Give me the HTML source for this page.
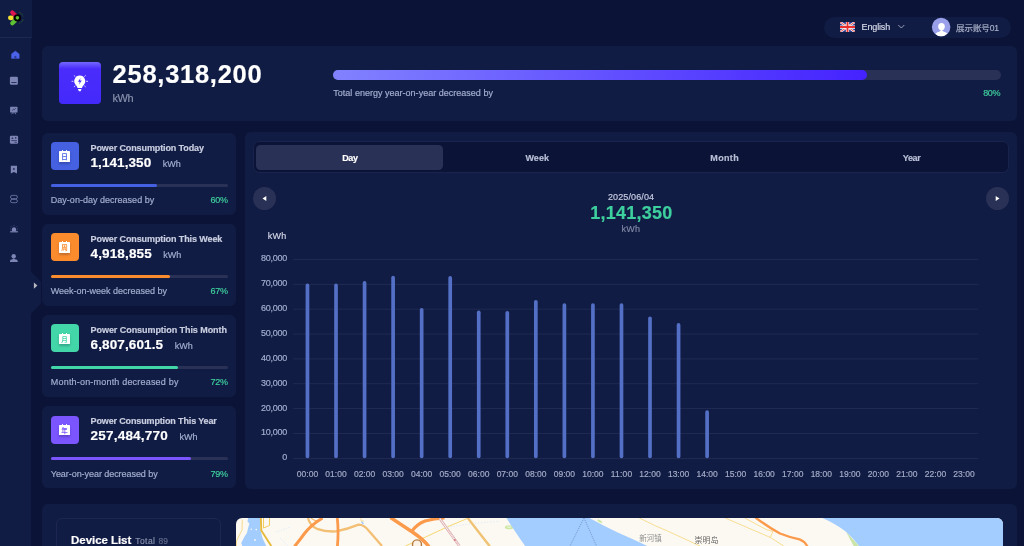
<!DOCTYPE html>
<html lang="en"><head><meta charset="utf-8"><title>Energy Dashboard</title>
<style>
html,body{margin:0;padding:0;}
body{width:1024px;height:546px;overflow:hidden;background:#0b1437;position:relative;font-family:"Liberation Sans","Noto Sans CJK SC",sans-serif;color:#fff;}
.a{position:absolute;}
.t{position:absolute;white-space:nowrap;line-height:30px;height:30px;-webkit-text-stroke:0.18px currentColor;}
.panel{position:absolute;background:#111c44;border-radius:6px;}
.b{font-weight:bold;}
</style></head>
<body>
<div id="root" style="position:absolute;left:0;top:0;width:1024px;height:546px;will-change:transform;">
<div class="a" style="left:0;top:0;width:32px;height:37px;background:#111c44;"></div>
<div class="a" style="left:0;top:37px;width:31px;height:509px;background:#111c44;"></div>
<div class="a" style="left:0;top:37px;width:32px;height:1px;background:#1d2751;"></div>
<svg class="a" style="left:0;top:0;" width="32" height="36" viewBox="0 0 32 36">
<line x1="12.3" y1="12.4" x2="15.2" y2="15.2" stroke="#dc1450" stroke-width="4.2" stroke-linecap="round"/>
<line x1="12.3" y1="23.3" x2="15.2" y2="20.5" stroke="#5fc232" stroke-width="4.2" stroke-linecap="round"/>
<line x1="10.3" y1="17.85" x2="11.4" y2="17.85" stroke="#f5e030" stroke-width="4.6" stroke-linecap="round"/>
<path d="M19.38 12.4 A5.8 5.8 0 0 1 23.0 16.35 M23.0 19.35 A5.8 5.8 0 0 1 19.38 23.3" fill="none" stroke="#2f6e2a" stroke-width="0.8" stroke-dasharray="1.6 0.7"/>
<circle cx="17.4" cy="17.85" r="2.75" fill="#5fc232" stroke="#000" stroke-width="1.9"/>
</svg>
<svg class="a" style="left:0;top:40px;" width="32" height="230" viewBox="0 40 32 230">
<path d="M15.35 50.9 L19.3 54 V58.5 H11.4 V54 Z" fill="#4a63e8" stroke="#4a63e8" stroke-width="0.3" stroke-linejoin="round"/>
<path d="M14.3 58.5 V56.3 Q15.35 55.2 16.4 56.3 V58.5 Z" fill="#2c3a9a"/>
<rect x="9.9" y="76.8" width="8" height="8" rx="1.2" fill="#7d85b5"/>
<rect x="11.2" y="81.9" width="5.4" height="1" rx="0.5" fill="#2a3260"/>
<rect x="10.1" y="106.8" width="7.4" height="5.7" rx="0.6" fill="#7d85b5"/>
<path d="M11.8 114.2 L12.6 112.4 M15.8 114.2 L15 112.4 M13.8 112.4 V113.6" stroke="#7d85b5" stroke-width="0.8" fill="none"/>
<path d="M12.2 110.4 L13.6 109.2 L14.2 109.7 L15.7 108.3" stroke="#2a3260" stroke-width="0.9" fill="none"/>
<rect x="9.9" y="135.7" width="8.2" height="8" rx="1.2" fill="#7d85b5"/>
<path d="M11.3 139 L12.4 136.9 L13.5 139 Z" fill="#2a3260"/><circle cx="15.7" cy="137.9" r="0.8" fill="#2a3260"/>
<path d="M11.3 140.6 H16.8 M14.6 142.3 H16.8" stroke="#2a3260" stroke-width="0.8"/>
<path d="M10.8 165.8 H17 V173.6 L13.9 171.9 L10.8 173.6 Z" fill="#7d85b5"/><circle cx="13.9" cy="168.9" r="1" fill="#2a3260"/>
<rect x="10.5" y="195.4" width="6.9" height="3.3" rx="1.65" fill="none" stroke="#616a99" stroke-width="1"/>
<rect x="10.5" y="199.4" width="6.9" height="3.3" rx="1.65" fill="none" stroke="#616a99" stroke-width="1"/>
<path d="M11.9 231.2 V229.3 A2.1 2.1 0 0 1 16.1 229.3 V231.2 Z" fill="#7d85b5"/>
<rect x="10.2" y="231.2" width="7.7" height="1.2" fill="#7d85b5"/>
<path d="M14 226.2 V225.2 M11.6 227 L10.9 226.3 M16.4 227 L17.1 226.3 M10.9 228.9 H10.1 M17.1 228.9 H17.9" stroke="#4f588a" stroke-width="0.8"/>
<circle cx="13.7" cy="256.3" r="2.2" fill="#7d85b5"/>
<path d="M10 261.9 V260.9 Q10 259.6 12.4 259.2 L13.7 258.2 L15 259.2 Q17.7 259.6 17.7 260.9 V261.9 Z" fill="#7d85b5"/>
</svg>
<svg class="a" style="left:30px;top:266px;" width="14" height="52" viewBox="30 266 14 52">
<path d="M31 272 L41 281.4 V303.4 L31 313.8 Z" fill="#111c44"/>
<path d="M33.9 282.4 L37.4 285.6 L33.9 288.8 Z" fill="#b7b8c0"/>
</svg>
<div class="a" style="left:824px;top:16.5px;width:187px;height:21px;border-radius:11px;background:#111c44;"></div>
<div class="t" style="top:12px;font-size:9px;color:#d5d9e8;left:861.60px;letter-spacing:-0.155px;">English</div>
<div class="t" style="top:13px;font-size:8.5px;color:#a9b0c8;left:956.10px;letter-spacing:-0.094px;">展示账号01</div>
<div class="panel" style="left:42px;top:46px;width:974.5px;height:75px;"></div>
<div class="a" style="left:59px;top:62px;width:42px;height:42px;border-radius:4px;background:linear-gradient(180deg,#7468ff 0%,#4a2dfc 16%,#4329fb 100%);"></div>
<div class="t" style="top:59px;font-size:25.5px;color:#fff;left:112.60px;letter-spacing:0.729px;font-weight:bold;">258,318,200</div>
<div class="t" style="top:83px;font-size:11px;color:#8790ab;left:112.50px;letter-spacing:-0.5px;">kWh</div>
<div class="a" style="left:333px;top:70px;width:667.5px;height:10px;border-radius:5px;background:#2a3156;"></div>
<div class="a" style="left:333px;top:70px;width:534px;height:10px;border-radius:5px;background:linear-gradient(90deg,#8282ff,#4422ff);"></div>
<div class="t" style="top:78px;font-size:9px;color:#a3aed0;left:333.30px;letter-spacing:0.014px;">Total energy year-on-year decreased by</div>
<div class="t" style="top:78px;font-size:9px;color:#3ecf9e;right:24.01px;letter-spacing:-0.408px;">80%</div>
<svg class="a" style="left:59px;top:62px;" width="42" height="42" viewBox="59 62 42 42">
<path d="M79.75 75.6 A5.5 5.5 0 0 1 83.7 84.9 Q82.2 86.3 82 88 H77.5 Q77.3 86.3 75.8 84.9 A5.5 5.5 0 0 1 79.75 75.6 Z" fill="#fff"/>
<path d="M77.9 89.1 H81.6 L80.6 91.3 H78.9 Z" fill="#fff"/>
<path d="M80.6 77.9 L77.9 81.7 H79.7 L79 84.5 L81.8 80.5 H79.9 Z" fill="#4329fb"/>
<path d="M72 81.3 H73 M86.5 81.3 H87.6 M74.2 75.7 L75 76.4 M85.4 75.7 L84.6 76.4 M74.2 86.7 L75 86 M85.4 86.7 L84.6 86" stroke="#fff" stroke-width="0.9" stroke-linecap="round" opacity="0.85"/>
</svg>
<svg class="a" style="left:840px;top:22px;" width="15" height="10" viewBox="0 0 60 40" preserveAspectRatio="none">
<rect width="60" height="40" fill="#2b3a8c"/>
<path d="M0 0 L60 40 M60 0 L0 40" stroke="#fff" stroke-width="9"/>
<path d="M0 0 L60 40 M60 0 L0 40" stroke="#e03a3a" stroke-width="3.5"/>
<path d="M30 0 V40 M0 20 H60" stroke="#fff" stroke-width="13"/>
<path d="M30 0 V40 M0 20 H60" stroke="#e8302f" stroke-width="7.5"/>
</svg>
<svg class="a" style="left:896px;top:22px;" width="12" height="10" viewBox="896 22 12 10"><path d="M898.3 25 L901.3 28 L904.3 25" fill="none" stroke="#b8bfd6" stroke-width="0.8"/></svg>
<svg class="a" style="left:931px;top:17px;" width="21" height="21" viewBox="931 17 21 21">
<defs><clipPath id="av"><circle cx="941.15" cy="26.95" r="9.25"/></clipPath></defs>
<circle cx="941.15" cy="26.95" r="9.25" fill="#9a9fe9"/>
<g clip-path="url(#av)" fill="#fff"><ellipse cx="941.5" cy="26.6" rx="3.3" ry="3.7"/><path d="M934.5 37 Q934.8 32.6 939.6 31.6 L941.5 29.5 L943.4 31.6 Q948.2 32.6 948.5 37 Z"/></g>
</svg>
<div class="panel" style="left:42px;top:132.50px;width:194px;height:82px;"></div>
<div class="a" style="left:51px;top:142.10px;width:28px;height:28px;border-radius:4px;background:#4560e0;"></div>
<div class="a" style="left:59px;top:151.30px;width:11.1px;height:10.3px;background:#fff;border-radius:0.6px;box-shadow:0 1.5px 2.5px rgba(0,0,30,0.22);"></div>
<div class="a" style="left:61.8px;top:150.20px;width:1.3px;height:1.4px;background:#fff;opacity:.9;"></div><div class="a" style="left:66.2px;top:150.20px;width:1.3px;height:1.4px;background:#fff;opacity:.9;"></div>
<div class="a" style="left:59px;top:152.20px;width:11.1px;height:9px;line-height:9px;text-align:center;font-size:6.5px;font-weight:bold;color:#4560e0;font-family:'Noto Sans CJK SC',sans-serif;">日</div>
<div class="t" style="top:133px;font-size:9px;color:#c9cee0;left:90.60px;letter-spacing:-0.111px;font-weight:bold;">Power Consumption Today</div>
<div class="t" style="top:148px;font-size:13.5px;color:#fff;left:90.50px;letter-spacing:0.073px;font-weight:bold;">1,141,350</div>
<div class="t" style="top:149px;font-size:9px;color:#a3aed0;left:162.75px;">kWh</div>
<div class="a" style="left:51px;top:184.00px;width:177px;height:3px;border-radius:1.5px;background:#2a3156;"></div>
<div class="a" style="left:51px;top:184.00px;width:106.2px;height:3px;border-radius:1.5px;background:#4560e0;"></div>
<div class="t" style="top:185px;font-size:9px;color:#a3aed0;left:50.80px;letter-spacing:0.015px;">Day-on-day decreased by</div>
<div class="t" style="top:185px;font-size:9px;color:#3ecf9e;right:796.31px;letter-spacing:-0.308px;">60%</div>
<div class="panel" style="left:42px;top:223.65px;width:194px;height:82px;"></div>
<div class="a" style="left:51px;top:233.25px;width:28px;height:28px;border-radius:4px;background:#fb8c2e;"></div>
<div class="a" style="left:59px;top:242.45px;width:11.1px;height:10.3px;background:#fff;border-radius:0.6px;box-shadow:0 1.5px 2.5px rgba(0,0,30,0.22);"></div>
<div class="a" style="left:61.8px;top:241.35px;width:1.3px;height:1.4px;background:#fff;opacity:.9;"></div><div class="a" style="left:66.2px;top:241.35px;width:1.3px;height:1.4px;background:#fff;opacity:.9;"></div>
<div class="a" style="left:59px;top:243.35px;width:11.1px;height:9px;line-height:9px;text-align:center;font-size:6.5px;font-weight:bold;color:#fb8c2e;font-family:'Noto Sans CJK SC',sans-serif;">周</div>
<div class="t" style="top:224px;font-size:9px;color:#c9cee0;left:90.60px;letter-spacing:-0.102px;font-weight:bold;">Power Consumption This Week</div>
<div class="t" style="top:239px;font-size:13.5px;color:#fff;left:90.50px;letter-spacing:0.148px;font-weight:bold;">4,918,855</div>
<div class="t" style="top:240px;font-size:9px;color:#a3aed0;left:163.35px;">kWh</div>
<div class="a" style="left:51px;top:275.15px;width:177px;height:3px;border-radius:1.5px;background:#2a3156;"></div>
<div class="a" style="left:51px;top:275.15px;width:118.6px;height:3px;border-radius:1.5px;background:#fb8c2e;"></div>
<div class="t" style="top:276px;font-size:9px;color:#a3aed0;left:50.80px;letter-spacing:-0.009px;">Week-on-week decreased by</div>
<div class="t" style="top:276px;font-size:9px;color:#3ecf9e;right:796.31px;letter-spacing:-0.308px;">67%</div>
<div class="panel" style="left:42px;top:314.80px;width:194px;height:82px;"></div>
<div class="a" style="left:51px;top:324.40px;width:28px;height:28px;border-radius:4px;background:#43d6a8;"></div>
<div class="a" style="left:59px;top:333.60px;width:11.1px;height:10.3px;background:#fff;border-radius:0.6px;box-shadow:0 1.5px 2.5px rgba(0,0,30,0.22);"></div>
<div class="a" style="left:61.8px;top:332.50px;width:1.3px;height:1.4px;background:#fff;opacity:.9;"></div><div class="a" style="left:66.2px;top:332.50px;width:1.3px;height:1.4px;background:#fff;opacity:.9;"></div>
<div class="a" style="left:59px;top:334.50px;width:11.1px;height:9px;line-height:9px;text-align:center;font-size:6.5px;font-weight:bold;color:#43d6a8;font-family:'Noto Sans CJK SC',sans-serif;">月</div>
<div class="t" style="top:315px;font-size:9px;color:#c9cee0;left:90.60px;letter-spacing:-0.059px;font-weight:bold;">Power Consumption This Month</div>
<div class="t" style="top:330px;font-size:13.5px;color:#fff;left:90.50px;letter-spacing:0.127px;font-weight:bold;">6,807,601.5</div>
<div class="t" style="top:331px;font-size:9px;color:#a3aed0;left:174.70px;">kWh</div>
<div class="a" style="left:51px;top:366.30px;width:177px;height:3px;border-radius:1.5px;background:#2a3156;"></div>
<div class="a" style="left:51px;top:366.30px;width:127.4px;height:3px;border-radius:1.5px;background:#43d6a8;"></div>
<div class="t" style="top:367px;font-size:9px;color:#a3aed0;left:50.80px;letter-spacing:0.193px;">Month-on-month decreased by</div>
<div class="t" style="top:367px;font-size:9px;color:#3ecf9e;right:796.31px;letter-spacing:-0.308px;">72%</div>
<div class="panel" style="left:42px;top:405.95px;width:194px;height:82px;"></div>
<div class="a" style="left:51px;top:415.55px;width:28px;height:28px;border-radius:4px;background:#7b55ff;"></div>
<div class="a" style="left:59px;top:424.75px;width:11.1px;height:10.3px;background:#fff;border-radius:0.6px;box-shadow:0 1.5px 2.5px rgba(0,0,30,0.22);"></div>
<div class="a" style="left:61.8px;top:423.65px;width:1.3px;height:1.4px;background:#fff;opacity:.9;"></div><div class="a" style="left:66.2px;top:423.65px;width:1.3px;height:1.4px;background:#fff;opacity:.9;"></div>
<div class="a" style="left:59px;top:425.65px;width:11.1px;height:9px;line-height:9px;text-align:center;font-size:6.5px;font-weight:bold;color:#7b55ff;font-family:'Noto Sans CJK SC',sans-serif;">年</div>
<div class="t" style="top:406px;font-size:9px;color:#c9cee0;left:90.60px;letter-spacing:-0.141px;font-weight:bold;">Power Consumption This Year</div>
<div class="t" style="top:421px;font-size:13.5px;color:#fff;left:90.50px;letter-spacing:0.222px;font-weight:bold;">257,484,770</div>
<div class="t" style="top:422px;font-size:9px;color:#a3aed0;left:179.40px;">kWh</div>
<div class="a" style="left:51px;top:457.45px;width:177px;height:3px;border-radius:1.5px;background:#2a3156;"></div>
<div class="a" style="left:51px;top:457.45px;width:139.8px;height:3px;border-radius:1.5px;background:#7b55ff;"></div>
<div class="t" style="top:459px;font-size:9px;color:#a3aed0;left:50.80px;letter-spacing:-0.056px;">Year-on-year decreased by</div>
<div class="t" style="top:459px;font-size:9px;color:#3ecf9e;right:796.31px;letter-spacing:-0.308px;">79%</div>
<div class="panel" style="left:245px;top:132.3px;width:771.6px;height:357.2px;"></div>
<div class="a" style="left:253.5px;top:142.2px;width:754px;height:30.3px;border-radius:5px;background:#0b1437;box-shadow:0 0 0 0.7px #1c2650;"></div>
<div class="a" style="left:256.2px;top:144.8px;width:187.3px;height:25.2px;border-radius:4.5px;background:#2a3156;"></div>
<div class="t" style="top:143px;font-size:9px;color:#fff;left:199.91px;width:300px;text-align:center;letter-spacing:-0.383px;font-weight:bold;">Day</div>
<div class="t" style="top:143px;font-size:9px;color:#b8bfd6;left:387.24px;width:300px;text-align:center;letter-spacing:0.08px;font-weight:bold;">Week</div>
<div class="t" style="top:143px;font-size:9px;color:#b8bfd6;left:574.67px;width:300px;text-align:center;letter-spacing:0.35px;font-weight:bold;">Month</div>
<div class="t" style="top:143px;font-size:9px;color:#b8bfd6;left:761.60px;width:300px;text-align:center;letter-spacing:-0.394px;font-weight:bold;">Year</div>
<div class="a" style="left:253px;top:187px;width:23px;height:23px;border-radius:50%;background:#2a3156;"></div>
<div class="a" style="left:985.5px;top:187px;width:23px;height:23px;border-radius:50%;background:#2a3156;"></div>
<svg class="a" style="left:253px;top:187px;" width="23" height="23" viewBox="0 0 23 23"><path d="M13.3 9 L13.3 14 L9.5 11.5 Z" fill="#fff"/></svg>
<svg class="a" style="left:985.5px;top:187px;" width="23" height="23" viewBox="0 0 23 23"><path d="M9.7 9 L9.7 14 L13.5 11.5 Z" fill="#fff"/></svg>
<div class="t" style="top:182px;font-size:9px;color:#c5cbe0;left:481.06px;width:300px;text-align:center;letter-spacing:0.128px;">2025/06/04</div>
<div class="t" style="top:198px;font-size:18px;color:#3ecf9e;left:481.41px;width:300px;text-align:center;letter-spacing:0.221px;font-weight:bold;">1,141,350</div>
<div class="t" style="top:214px;font-size:9px;color:#7d86a3;left:480.90px;width:300px;text-align:center;letter-spacing:0.2px;">kWh</div>
<div class="t" style="top:221px;font-size:9px;color:#d0d5e5;left:267.75px;letter-spacing:0.25px;">kWh</div>
<svg class="a" style="left:0;top:0;" width="1024" height="546" viewBox="0 0 1024 546"><rect x="293.2" y="259.00" width="685.0999999999999" height="0.8" fill="#242e55"/><rect x="293.2" y="283.88" width="685.0999999999999" height="0.8" fill="#242e55"/><rect x="293.2" y="308.75" width="685.0999999999999" height="0.8" fill="#242e55"/><rect x="293.2" y="333.62" width="685.0999999999999" height="0.8" fill="#242e55"/><rect x="293.2" y="358.50" width="685.0999999999999" height="0.8" fill="#242e55"/><rect x="293.2" y="383.38" width="685.0999999999999" height="0.8" fill="#242e55"/><rect x="293.2" y="408.25" width="685.0999999999999" height="0.8" fill="#242e55"/><rect x="293.2" y="433.12" width="685.0999999999999" height="0.8" fill="#242e55"/><rect x="293.2" y="458.00" width="685.0999999999999" height="0.8" fill="#242e55"/><rect x="305.62" y="283.60" width="3.7" height="174.60" rx="1.85" fill="#5470c6"/><rect x="334.17" y="283.60" width="3.7" height="174.60" rx="1.85" fill="#5470c6"/><rect x="362.71" y="280.90" width="3.7" height="177.30" rx="1.85" fill="#5470c6"/><rect x="391.26" y="275.75" width="3.7" height="182.45" rx="1.85" fill="#5470c6"/><rect x="419.81" y="308.00" width="3.7" height="150.20" rx="1.85" fill="#5470c6"/><rect x="448.35" y="276.10" width="3.7" height="182.10" rx="1.85" fill="#5470c6"/><rect x="476.90" y="310.50" width="3.7" height="147.70" rx="1.85" fill="#5470c6"/><rect x="505.44" y="310.90" width="3.7" height="147.30" rx="1.85" fill="#5470c6"/><rect x="533.99" y="299.90" width="3.7" height="158.30" rx="1.85" fill="#5470c6"/><rect x="562.54" y="303.25" width="3.7" height="154.95" rx="1.85" fill="#5470c6"/><rect x="591.08" y="303.25" width="3.7" height="154.95" rx="1.85" fill="#5470c6"/><rect x="619.63" y="303.25" width="3.7" height="154.95" rx="1.85" fill="#5470c6"/><rect x="648.17" y="316.50" width="3.7" height="141.70" rx="1.85" fill="#5470c6"/><rect x="676.72" y="323.10" width="3.7" height="135.10" rx="1.85" fill="#5470c6"/><rect x="705.26" y="410.25" width="3.7" height="47.95" rx="1.85" fill="#5470c6"/></svg>
<div class="t" style="top:243px;font-size:9px;color:#a3aed0;right:737.06px;letter-spacing:-0.256px;">80,000</div>
<div class="t" style="top:268px;font-size:9px;color:#a3aed0;right:737.06px;letter-spacing:-0.256px;">70,000</div>
<div class="t" style="top:293px;font-size:9px;color:#a3aed0;right:737.06px;letter-spacing:-0.256px;">60,000</div>
<div class="t" style="top:318px;font-size:9px;color:#a3aed0;right:737.06px;letter-spacing:-0.256px;">50,000</div>
<div class="t" style="top:343px;font-size:9px;color:#a3aed0;right:737.06px;letter-spacing:-0.256px;">40,000</div>
<div class="t" style="top:368px;font-size:9px;color:#a3aed0;right:737.06px;letter-spacing:-0.256px;">30,000</div>
<div class="t" style="top:393px;font-size:9px;color:#a3aed0;right:737.06px;letter-spacing:-0.256px;">20,000</div>
<div class="t" style="top:417px;font-size:9px;color:#a3aed0;right:737.06px;letter-spacing:-0.256px;">10,000</div>
<div class="t" style="top:442px;font-size:9px;color:#a3aed0;right:736.80px;">0</div>
<div class="t" style="top:459px;font-size:8.5px;color:#a3abc6;left:157.48px;width:300px;text-align:center;letter-spacing:0.005px;">00:00</div>
<div class="t" style="top:459px;font-size:8.5px;color:#a3abc6;left:186.02px;width:300px;text-align:center;letter-spacing:0.005px;">01:00</div>
<div class="t" style="top:459px;font-size:8.5px;color:#a3abc6;left:214.57px;width:300px;text-align:center;letter-spacing:0.005px;">02:00</div>
<div class="t" style="top:459px;font-size:8.5px;color:#a3abc6;left:243.11px;width:300px;text-align:center;letter-spacing:0.005px;">03:00</div>
<div class="t" style="top:459px;font-size:8.5px;color:#a3abc6;left:271.66px;width:300px;text-align:center;letter-spacing:0.005px;">04:00</div>
<div class="t" style="top:459px;font-size:8.5px;color:#a3abc6;left:300.20px;width:300px;text-align:center;letter-spacing:0.005px;">05:00</div>
<div class="t" style="top:459px;font-size:8.5px;color:#a3abc6;left:328.75px;width:300px;text-align:center;letter-spacing:0.005px;">06:00</div>
<div class="t" style="top:459px;font-size:8.5px;color:#a3abc6;left:357.30px;width:300px;text-align:center;letter-spacing:0.005px;">07:00</div>
<div class="t" style="top:459px;font-size:8.5px;color:#a3abc6;left:385.84px;width:300px;text-align:center;letter-spacing:0.005px;">08:00</div>
<div class="t" style="top:459px;font-size:8.5px;color:#a3abc6;left:414.39px;width:300px;text-align:center;letter-spacing:0.005px;">09:00</div>
<div class="t" style="top:459px;font-size:8.5px;color:#a3abc6;left:442.93px;width:300px;text-align:center;letter-spacing:0.005px;">10:00</div>
<div class="t" style="top:459px;font-size:8.5px;color:#a3abc6;left:471.56px;width:300px;text-align:center;letter-spacing:0.165px;">11:00</div>
<div class="t" style="top:459px;font-size:8.5px;color:#a3abc6;left:500.03px;width:300px;text-align:center;letter-spacing:0.005px;">12:00</div>
<div class="t" style="top:459px;font-size:8.5px;color:#a3abc6;left:528.57px;width:300px;text-align:center;letter-spacing:0.005px;">13:00</div>
<div class="t" style="top:459px;font-size:8.5px;color:#a3abc6;left:557.12px;width:300px;text-align:center;letter-spacing:0.005px;">14:00</div>
<div class="t" style="top:459px;font-size:8.5px;color:#a3abc6;left:585.66px;width:300px;text-align:center;letter-spacing:0.005px;">15:00</div>
<div class="t" style="top:459px;font-size:8.5px;color:#a3abc6;left:614.21px;width:300px;text-align:center;letter-spacing:0.005px;">16:00</div>
<div class="t" style="top:459px;font-size:8.5px;color:#a3abc6;left:642.75px;width:300px;text-align:center;letter-spacing:0.005px;">17:00</div>
<div class="t" style="top:459px;font-size:8.5px;color:#a3abc6;left:671.30px;width:300px;text-align:center;letter-spacing:0.005px;">18:00</div>
<div class="t" style="top:459px;font-size:8.5px;color:#a3abc6;left:699.85px;width:300px;text-align:center;letter-spacing:0.005px;">19:00</div>
<div class="t" style="top:459px;font-size:8.5px;color:#a3abc6;left:728.39px;width:300px;text-align:center;letter-spacing:0.005px;">20:00</div>
<div class="t" style="top:459px;font-size:8.5px;color:#a3abc6;left:756.94px;width:300px;text-align:center;letter-spacing:0.005px;">21:00</div>
<div class="t" style="top:459px;font-size:8.5px;color:#a3abc6;left:785.48px;width:300px;text-align:center;letter-spacing:0.005px;">22:00</div>
<div class="t" style="top:459px;font-size:8.5px;color:#a3abc6;left:814.03px;width:300px;text-align:center;letter-spacing:0.005px;">23:00</div>
<div class="panel" style="left:42px;top:503.5px;width:974.5px;height:60px;"></div>
<div class="a" style="left:56px;top:518px;width:165px;height:60px;border-radius:6px;border:0.6px solid #1d2650;box-sizing:border-box;"></div>
<div class="t" style="top:525px;font-size:11.5px;color:#fff;left:71.10px;letter-spacing:-0.053px;font-weight:bold;">Device List</div>
<div class="t" style="top:526px;font-size:8.5px;color:#8790ab;left:135.20px;letter-spacing:0.458px;">Total</div>
<div class="t" style="top:526px;font-size:8.5px;color:#5f6888;left:158.60px;letter-spacing:-0.069px;">89</div>
<svg class="a" style="left:236px;top:518px;" width="767" height="28" viewBox="236 518 767 28">
<defs><clipPath id="mc"><rect x="236" y="518" width="767" height="40" rx="6"/></clipPath></defs>
<g clip-path="url(#mc)">
<rect x="236" y="518" width="767" height="28" fill="#fcf9f2"/>
<!-- lake -->
<path d="M248.1 518 L260 518 L260 528 L261.2 533 L262.5 538 L266.5 546.5 L242.5 546.5 L241.2 543 L242.5 540.5 L244.4 536.8 L246.9 533 L248.1 528 L249.4 523.6 L247.5 521.7 Z" fill="#a3ccff"/>
<circle cx="251.3" cy="529.2" r="0.8" fill="#fcf9f2"/><circle cx="256.2" cy="529.6" r="0.8" fill="#fcf9f2"/><circle cx="255" cy="540" r="0.9" fill="#fcf9f2"/>
<path d="M242.3 519.5 L242 530 L236.5 541 L236.3 546" fill="none" stroke="#f2cc62" stroke-width="0.7"/>
<path d="M263.5 518 V528 L269.5 525.5 V518" fill="none" stroke="#f0c64e" stroke-width="0.9"/>
<path d="M260.8 518 L261.3 530.5 L271.3 546" fill="none" stroke="#e6ba3c" stroke-width="1.9"/>
<path d="M276 532 L290 527 M280 538 L288 546" stroke="#cfe3fb" stroke-width="0.6" stroke-dasharray="1.2 1.4" fill="none"/>
<!-- light orange road -->
<path d="M308 518 Q310 526 317 528.8 Q326 532 336 531.4 Q348 529 358.5 524.6 Q364 524.5 369 531 L382 546" fill="none" stroke="#f3bf74" stroke-width="2.3"/>
<path d="M311 518 Q318 524 322 518" fill="none" stroke="#f3bf74" stroke-width="1.2"/>
<!-- orange roads -->
<path d="M322.5 518 Q311 525 304.5 533.5 Q299 541 294.5 546.5" fill="none" stroke="#fb9a4b" stroke-width="3"/>
<path d="M337.3 518 Q338.8 532 337.4 546.5" fill="none" stroke="#fb9a4b" stroke-width="2.8"/>
<path d="M362 522 l1 1.6" stroke="#a3ccff" stroke-width="1.6" stroke-linecap="round"/>
<path d="M361 518 v3 h3" fill="none" stroke="#f2cc62" stroke-width="0.6"/>
<path d="M467.8 518.3 L447.5 526.8 L425.6 537 L405.3 546" fill="none" stroke="#f5d262" stroke-width="0.9"/>
<path d="M411.6 531.5 Q417 524 425 521 Q434 518.6 444.5 518" fill="none" stroke="#fb9a4b" stroke-width="3"/>
<path d="M390.5 517.5 L411.6 531.5 Q422 538 429 546.5" fill="none" stroke="#fb9a4b" stroke-width="3.4"/>
<circle cx="417" cy="544.4" r="4.5" fill="#fcf3e6" stroke="#b87a3c" stroke-width="1.4"/>
<!-- railway -->
<path d="M439.7 518.5 L459.4 546" fill="none" stroke="#dcaab0" stroke-width="2.6"/>
<path d="M439.7 518.5 L459.4 546" fill="none" stroke="#fcf9f2" stroke-width="1.2"/>
<path d="M439.7 518.5 L459.4 546" fill="none" stroke="#d9a3aa" stroke-width="1.2" stroke-dasharray="0.5 1.3"/>
<circle cx="454.8" cy="540" r="1" fill="#d47a86"/>
<path d="M447.5 527.6 Q470 523 500 521.4" fill="none" stroke="#cfe3fb" stroke-width="0.7" stroke-dasharray="1.3 1.8"/>
<path d="M467.8 518 L478.8 532.3 L489.8 546.3" fill="none" stroke="#f0c274" stroke-width="2.4"/>
<ellipse cx="509.2" cy="527.2" rx="4.3" ry="2" fill="#cfe8a8"/><ellipse cx="509.2" cy="527.2" rx="2.2" ry="0.9" fill="#e4f3cc"/>
<!-- river -->
<path d="M506.5 518 L589.5 518 Q604 526 617.7 532.5 Q634 539.5 648.4 546.5 L525.5 546.5 Q514 530 506.5 518 Z" fill="#a3ccff"/>
<path d="M584 518 L570 546 M584 518 L596.5 546" stroke="#6f8ebf" stroke-width="0.7" stroke-dasharray="1.3 0.9" fill="none"/>
<ellipse cx="599.8" cy="521.3" rx="2.8" ry="1.1" fill="#cfe8a8" transform="rotate(28 599.8 521.3)"/>
<!-- thin yellow roads -->
<path d="M639.3 518 Q655 526 668.6 531.5 Q683 538 696 544.2 L700 546" fill="none" stroke="#f6d77a" stroke-width="0.8"/>
<path d="M725.2 518 L770.2 537.4 L783.8 546" fill="none" stroke="#f6d77a" stroke-width="0.8"/>
<path d="M744.8 518 L766.3 529.6 L773 531.5 L770.2 537.4" fill="none" stroke="#f6d77a" stroke-width="0.8"/>
<path d="M755.5 517.5 Q768 527 780 533.5 Q790 537.5 799.5 539.3 Q804.5 541 807.5 546.5" fill="none" stroke="#fb9a4b" stroke-width="2.3"/>
<!-- sea -->
<path d="M846 531.7 L859.5 546.5 L854 546.5 Z" fill="#c9e4a6"/>
<path d="M822.5 518 Q836 524 846 531.7 Q854 539 859.5 546.5 L1003 546.5 L1003 518 Z" fill="#a3ccff"/>
<text x="639.3" y="540.6" font-size="7.5" fill="#8e8e8e" font-family="'Liberation Sans','Noto Sans CJK SC',sans-serif">新河镇</text>
<text x="694.4" y="543.4" font-size="8" fill="#666" font-family="'Liberation Sans','Noto Sans CJK SC',sans-serif">崇明岛</text>
</g></svg>
</div>
</body></html>
